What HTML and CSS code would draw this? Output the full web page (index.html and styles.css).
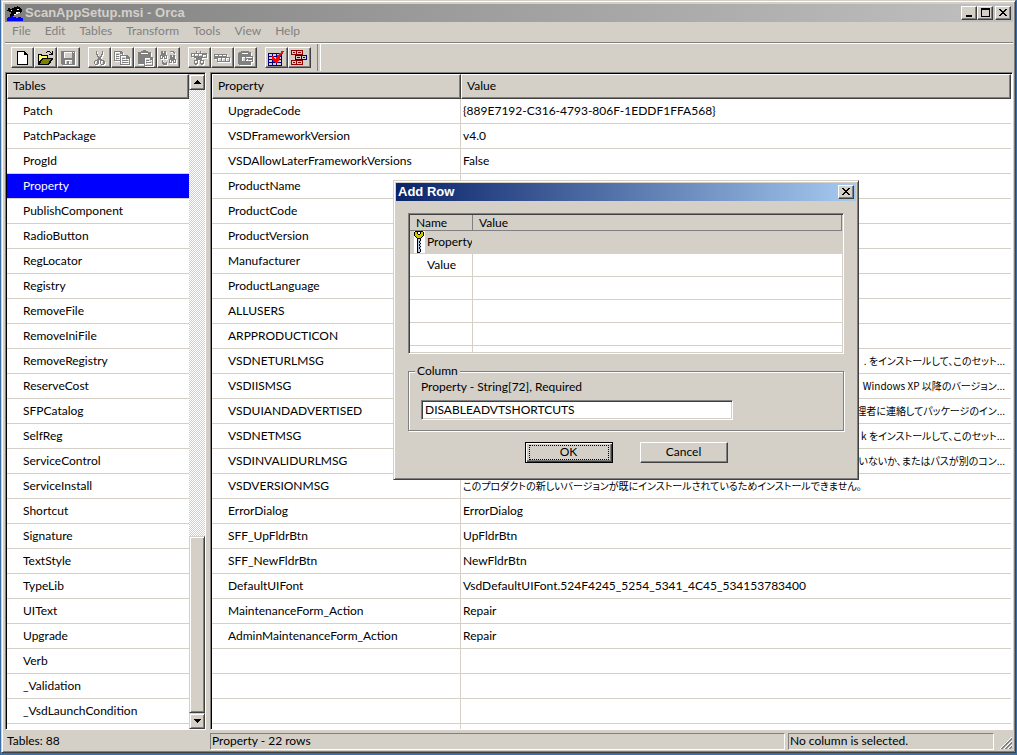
FILE: index.html
```
<!DOCTYPE html>
<html lang="en">
<head>
    <meta charset="UTF-8">
    <meta name="viewport" content="width=device-width, initial-scale=1.0">
    <title>ScanAppSetup.msi - Orca</title>
    <link rel="stylesheet" href="styles.css">
</head>
<body>
    <div class="window">
        <header class="titlebar">
            <svg class="app-icon" viewBox="0 0 16 16" shape-rendering="crispEdges">
                <path d="M1 3h2v1h2V3h2V2h3V1h1v1h2v1h1v1h1v3h-1v1h-3v1H9v1H7v1H5v1H3V9h1V7H2V6H0V5h1z" fill="#000"/>
                <path d="M10 4h2v1h-2zM9 7h4v1h-2v1H9v1H7V9h2zM4 5h1v1H4z" fill="#fff"/>
                <path d="M0 13h1v-1h3v-1h2v1h3v1h2v-1h3v1h2v3H0z" fill="#00f"/>
            </svg>
            <h1 class="title">ScanAppSetup.msi - Orca</h1>
            <div class="caption-buttons">
                <button class="caption" aria-label="Minimize"><svg viewBox="0 0 12 10" shape-rendering="crispEdges"><path d="M3 7h6v2H3z"/></svg></button>
                <button class="caption" aria-label="Maximize"><svg viewBox="0 0 12 10" shape-rendering="crispEdges"><path d="M2 0h9v9H2zM3 2v6h7V2z" fill-rule="evenodd"/></svg></button>
                <button class="caption close" aria-label="Close"><svg viewBox="0 0 12 10" shape-rendering="crispEdges"><path d="M2 1h2v1h1v1h2V2h1V1h2v1H9v1H8v1H7v1h1v1h1v1h1v1H8V7H7V6H5v1H4v1H2V7h1V6h1V5h1V4H4V3H3V2H2z"/></svg></button>
            </div>
        </header>

        <nav class="menubar">
            <button>File</button>
            <button>Edit</button>
            <button>Tables</button>
            <button>Transform</button>
            <button>Tools</button>
            <button>View</button>
            <button>Help</button>
        </nav>

        <div class="toolbar">
            <div class="tool-group">
                <button class="tool" aria-label="New">
                    <svg viewBox="0 0 16 16" shape-rendering="crispEdges"><path d="M3 1h8v1h1v1h1v1h1v11H3z" fill="#000"/><path d="M4 2h6v3h3v9H4z" fill="#fff"/></svg>
                </button>
                <button class="tool" aria-label="Open">
                    <svg viewBox="0 0 16 16" shape-rendering="crispEdges">
                        <path d="M1 4h4v1h6v3h5v1l-4 6H1z" fill="#000"/>
                        <path d="M2 5h2v1h6v2H5L2 12z" fill="#ffff60"/>
                        <path d="M6 9h8l-3 5H3z" fill="#808000"/>
                        <path d="M9 2h1V1h3v1h1v1h1V1h1v4h-4V4h2V3h-1V2h-3v1H9z" fill="#000"/>
                    </svg>
                </button>
                <button class="tool" aria-label="Save" disabled>
                    <svg viewBox="0 0 16 16" shape-rendering="crispEdges"><path d="M1 1h14v14H2l-1-1zM4 2v6h8V2zM5 10v4h2v-3h2v3h3v-4zM13 2v1h1V2z" fill-rule="evenodd"/></svg>
                </button>
            </div>
            <div class="tool-group">
                <button class="tool" aria-label="Cut" disabled>
                    <svg viewBox="0 0 16 16" shape-rendering="crispEdges"><path d="M5 1h1v3h1v2h1v1h1V6h1V4h1V1h1v4h-1v2h-1v2h1v1h2v1h1v3h-1v1h-3v-1H9v-4H8v4H7v1H4v-1H3v-3h1v-1h2V9h1V7H6V5H5zM4 11v3h2v-3zM10 11v3h2v-3z" fill-rule="evenodd"/></svg>
                </button>
                <button class="tool" aria-label="Copy" disabled>
                    <svg viewBox="0 0 16 16" shape-rendering="crispEdges"><path d="M0 1h7l2 2v2h4l3 3v7H6v-4H0zM1 2v8h5V5h2V4H6V2zM7 6v8h8V9h-3V6zM2 4h3v1H2zM2 6h3v1H2zM2 8h3v1H2zM8 8h3v1H8zM8 10h6v1H8zM8 12h6v1H8z" fill-rule="evenodd"/></svg>
                </button>
                <button class="tool" aria-label="Paste" disabled>
                    <svg viewBox="0 0 16 16" shape-rendering="crispEdges"><path d="M1 2h3V1h2V0h3v1h2v1h3v5h2v9H7v-2H1zM4 3v1h7V3zM8 8v7h7v-5h-2V8zM9 10h3v1H9zM9 12h5v1H9z" fill-rule="evenodd"/></svg>
                </button>
                <button class="tool" aria-label="Find and replace" disabled>
                    <svg viewBox="0 0 16 16" shape-rendering="crispEdges"><path d="M1 1h2v2h1V1h2v4h1v4H4V7H3v2H0V5h1zM1 6v2h1V6zM5 6v2h1V6zM10 5h2v2h1V5h2v4h1v4h-3v-2h-1v2H9V9h1zM10 10v2h1v-2zM14 10v2h1v-2zM10 1h4v1h1v2h-1V3h-1V2h-3zM2 10h1v2h1v1h2v-1h1v3H3v-1H2z" fill-rule="evenodd"/></svg>
                </button>
            </div>
            <div class="tool-group">
                <button class="tool" aria-label="Cut row" disabled>
                    <svg viewBox="0 0 16 16" shape-rendering="crispEdges"><path d="M0 3h5V1h1v2h3V1h1v2h6v5h-5v2h2v4h-1v1h-2v-1H9v-4H7v4H6v1H4v-1H3v-4h2V8H3V7H0zM1 4v2h2V4zM4 4v2h3V4zM8 4v2h3V4zM12 5v2h3V5zM4 11v2h2v-2zM10 11v2h2v-2z" fill-rule="evenodd"/></svg>
                </button>
                <button class="tool" aria-label="Copy row" disabled>
                    <svg viewBox="0 0 16 16" shape-rendering="crispEdges"><path d="M0 4h13v3h3v5H3V9H0zM1 5v1h3V5zM5 5v1h3V5zM9 5v1h3V5zM4 8v3h3V8zM8 8v3h3V8zM12 8v3h3V8z" fill-rule="evenodd"/></svg>
                </button>
                <button class="tool" aria-label="Paste row" disabled>
                    <svg viewBox="0 0 16 16" shape-rendering="crispEdges"><path d="M2 2h2V1h8v1h2v4h2v6h-2v3H2v-1H1V3h1zM5 3v1h6V3zM5 7v4h3V7zM9 7v1h6V7zM9 10v1h6v-1zM10 9v1h1V9z" fill-rule="evenodd"/></svg>
                </button>
            </div>
            <div class="tool-group">
                <button class="tool" aria-label="Validate">
                    <svg viewBox="0 0 16 16" shape-rendering="crispEdges">
                        <path d="M0 3h14v13H0zM1 4v2h3V4zM5 4v2h3V4zM9 4v2h4V4zM1 7v2h3V7zM5 7v2h3V7zM9 7v2h4V7zM1 10v2h3v-2zM5 10v2h3v-2zM9 10v2h4v-2zM1 13v2h3v-2zM5 13v2h3v-2zM9 13v2h4v-2z" fill="#000080" fill-rule="evenodd"/>
                        <path d="M4 6h2v2h1v1h1V7h1V5h2V3h2V1h3v1h-1v2h-2v2h-1v3h-1v2h-1v2H7v-1H5v-2H4z" fill="#f00"/>
                    </svg>
                </button>
                <button class="tool" aria-label="View transform">
                    <svg viewBox="0 0 16 16" shape-rendering="crispEdges">
                        <path d="M0 0h12v5H0zM1 1v3h4V1zM6 1v3h5V1zM2 2h2v1H2zM7 2h3v1H7zM0 10h12v5H0zM1 11v3h4v-3zM6 11v3h5v-3zM2 12h2v1H2zM7 12h3v1H7z" fill="#900000" fill-rule="evenodd"/>
                        <path d="M4 5h12v5H4zM5 6v3h5V6zM11 6v3h4V6zM6 7h3v1H6zM12 7h2v1h-2z" fill="#000080" fill-rule="evenodd"/>
                    </svg>
                </button>
            </div>
        </div>

        <main class="panes">
            <section class="pane tables-pane">
                <table class="grid">
                    <thead><tr><th>Tables</th></tr></thead>
                    <tbody>
                        <tr><td>Patch</td></tr>
                        <tr><td>PatchPackage</td></tr>
                        <tr><td>ProgId</td></tr>
                        <tr class="selected"><td>Property</td></tr>
                        <tr><td>PublishComponent</td></tr>
                        <tr><td>RadioButton</td></tr>
                        <tr><td>RegLocator</td></tr>
                        <tr><td>Registry</td></tr>
                        <tr><td>RemoveFile</td></tr>
                        <tr><td>RemoveIniFile</td></tr>
                        <tr><td>RemoveRegistry</td></tr>
                        <tr><td>ReserveCost</td></tr>
                        <tr><td>SFPCatalog</td></tr>
                        <tr><td>SelfReg</td></tr>
                        <tr><td>ServiceControl</td></tr>
                        <tr><td>ServiceInstall</td></tr>
                        <tr><td>Shortcut</td></tr>
                        <tr><td>Signature</td></tr>
                        <tr><td>TextStyle</td></tr>
                        <tr><td>TypeLib</td></tr>
                        <tr><td>UIText</td></tr>
                        <tr><td>Upgrade</td></tr>
                        <tr><td>Verb</td></tr>
                        <tr><td>_Validation</td></tr>
                        <tr><td>_VsdLaunchCondition</td></tr>
                    </tbody>
                </table>
                <div class="scrollbar">
                    <button class="scroll-button" aria-label="Scroll up"><svg viewBox="0 0 7 4" shape-rendering="crispEdges"><path d="M3 0h1v1h1v1h1v1h1v1H0V3h1V2h1V1h1z"/></svg></button>
                    <div class="track"><div class="thumb"></div></div>
                    <button class="scroll-button" aria-label="Scroll down"><svg viewBox="0 0 7 4" shape-rendering="crispEdges"><path d="M0 0h7v1H6v1H5v1H4v1H3V3H2V2H1V1H0z"/></svg></button>
                </div>
            </section>

            <section class="pane rows-pane">
                <table class="grid">
                    <colgroup><col class="col-property"><col></colgroup>
                    <thead><tr><th>Property</th><th>Value</th></tr></thead>
                    <tbody>
                        <tr><td>UpgradeCode</td><td>{889E7192-C316-4793-806F-1EDDF1FFA568}</td></tr>
                        <tr><td>VSDFrameworkVersion</td><td>v4.0</td></tr>
                        <tr><td>VSDAllowLaterFrameworkVersions</td><td>False</td></tr>
                        <tr><td>ProductName</td><td></td></tr>
                        <tr><td>ProductCode</td><td></td></tr>
                        <tr><td>ProductVersion</td><td></td></tr>
                        <tr><td>Manufacturer</td><td></td></tr>
                        <tr><td>ProductLanguage</td><td></td></tr>
                        <tr><td>ALLUSERS</td><td></td></tr>
                        <tr><td>ARPPRODUCTICON</td><td></td></tr>
                        <tr><td>VSDNETURLMSG</td><td class="cut" lang="ja">. をインストールして、このセット...</td></tr>
                        <tr><td>VSDIISMSG</td><td class="cut" lang="ja">Windows XP 以降のバージョン...</td></tr>
                        <tr><td>VSDUIANDADVERTISED</td><td class="cut" lang="ja">管理者に連絡してパッケージのイン...</td></tr>
                        <tr><td>VSDNETMSG</td><td class="cut" lang="ja">k をインストールして、このセット...</td></tr>
                        <tr><td>VSDINVALIDURLMSG</td><td class="cut" lang="ja">いないか、またはパスが別のコン...</td></tr>
                        <tr><td>VSDVERSIONMSG</td><td lang="ja">このプロダクトの新しいバージョンが既にインストールされているためインストールできません。</td></tr>
                        <tr><td>ErrorDialog</td><td>ErrorDialog</td></tr>
                        <tr><td>SFF_UpFldrBtn</td><td>UpFldrBtn</td></tr>
                        <tr><td>SFF_NewFldrBtn</td><td>NewFldrBtn</td></tr>
                        <tr><td>DefaultUIFont</td><td>VsdDefaultUIFont.524F4245_5254_5341_4C45_534153783400</td></tr>
                        <tr><td>MaintenanceForm_Action</td><td>Repair</td></tr>
                        <tr><td>AdminMaintenanceForm_Action</td><td>Repair</td></tr>
                        <tr><td></td><td></td></tr>
                        <tr><td></td><td></td></tr>
                        <tr><td></td><td></td></tr>
                        <tr><td></td><td></td></tr>
                    </tbody>
                </table>
            </section>
        </main>

        <footer class="statusbar">
            <span class="status-tables">Tables: 88</span>
            <span class="status-cell status-rows">Property - 22 rows</span>
            <span class="status-cell status-column">No column is selected.</span>
            <svg class="grip" viewBox="0 0 12 12"><path d="M0 12L12 0M4 12l8-8M8 12l4-4" stroke="#fff"/><path d="M1 12L12 1M2 12L12 2M5 12l7-7M6 12l6-6M9 12l3-3M10 12l2-2" stroke="#808080"/></svg>
        </footer>
    </div>

    <div class="dialog" role="dialog" aria-labelledby="dialogTitle">
        <div class="titlebar">
            <h2 class="title" id="dialogTitle">Add Row</h2>
            <div class="caption-buttons">
                <button class="caption close" aria-label="Close"><svg viewBox="0 0 12 10" shape-rendering="crispEdges"><path d="M2 1h2v1h1v1h2V2h1V1h2v1H9v1H8v1H7v1h1v1h1v1h1v1H8V7H7V6H5v1H4v1H2V7h1V6h1V5h1V4H4V3H3V2H2z"/></svg></button>
            </div>
        </div>
        <form class="dialog-body">
            <div class="field-list">
                <table>
                    <colgroup><col class="col-name"><col></colgroup>
                    <thead><tr><th>Name</th><th>Value</th></tr></thead>
                    <tbody>
                        <tr class="current">
                            <td>
                                <div class="key-cell">
                                    <svg class="key" viewBox="0 0 11 22" shape-rendering="crispEdges">
                                        <path d="M0 0h11v22H0z" fill="#fff"/>
                                        <path d="M1 0h8v1h1v4H9v1H8v1H7v2H3V7H2V6H1V5H0V1h1z" fill="#000"/>
                                        <path d="M1 1h2v2h1v1h2V3h1V1h2v4H8v1H7v1H3V6H2V5H1z" fill="#cc0"/>
                                        <path d="M4 1h2v2H4z" fill="#fff"/>
                                        <path d="M3 8h4v13H6v1H3z" fill="#b8c8e0"/>
                                        <path d="M3 8h1v14H3zM6 8h1v2H6zM5 10h1v2H5zM6 12h1v1H6zM5 13h1v2H5zM6 15h1v1H6zM5 16h1v2H5zM6 18h1v3H6zM4 21h2v1H4z" fill="#000"/>
                                    </svg>
                                    Property
                                </div>
                            </td>
                            <td></td>
                        </tr>
                        <tr><td>Value</td><td></td></tr>
                        <tr><td></td><td></td></tr>
                        <tr><td></td><td></td></tr>
                        <tr><td></td><td></td></tr>
                        <tr><td></td><td></td></tr>
                    </tbody>
                </table>
            </div>
            <fieldset class="column-box">
                <legend>Column</legend>
                <label for="columnValue">Property - String[72], Required</label>
                <input type="text" id="columnValue" value="DISABLEADVTSHORTCUTS">
            </fieldset>
            <div class="dialog-buttons">
                <button type="button" class="push default"><span>OK</span></button>
                <button type="button" class="push">Cancel</button>
            </div>
        </form>
    </div>
</body>
</html>
```
FILE: styles.css
```
* {
    box-sizing: border-box;
}
body {
    margin: 0;
    height: 100vh;
    padding: 0 1px 2px 1px;
    overflow: hidden;
    background-color: #3a6ea5;
    font-family: Lato, "Noto Sans CJK JP", sans-serif;
    font-size: 12px;
    line-height: 16px;
    color: #000;
}
button, input {
    font: inherit;
    color: inherit;
}
button {
    padding: 0;
    border: none;
    background-color: #d4d0c8;
}
svg {
    display: block;
}
table {
    width: 100%;
    table-layout: fixed;
    border-collapse: separate;
    border-spacing: 0;
}
th {
    font-weight: normal;
    text-align: left;
    background-color: #d4d0c8;
}
td {
    white-space: nowrap;
    overflow: hidden;
}

/* main window */
.window {
    display: flex;
    flex-direction: column;
    height: 100%;
    padding: 2px 1px 0 2px;
    background-color: #d4d0c8;
    border: 1px solid #404040;
    border-top-color: #d4d0c8;
    border-left-color: #d4d0c8;
    box-shadow: inset 1px 1px #fff, inset -1px -1px #808080;
}
.titlebar {
    display: flex;
    align-items: center;
    height: 18px;
    margin: 1px 1px 0 1px;
    padding: 0 2px;
    background: linear-gradient(to right, #808080, #c0c0c0);
    color: #d4d0c8;
}
.app-icon {
    width: 16px;
    height: 16px;
    margin-right: 2px;
}
.title {
    flex: 1;
    margin: 0;
    font-family: "Liberation Sans", sans-serif;
    font-size: 13px;
    line-height: 16px;
    font-weight: bold;
}
.caption-buttons {
    display: flex;
}
.caption {
    width: 16px;
    height: 14px;
    padding: 1px;
    border: 1px solid #404040;
    border-top-color: #fff;
    border-left-color: #fff;
    box-shadow: inset -1px -1px #808080;
}
.caption svg {
    width: 12px;
    height: 10px;
}
.caption + .close {
    margin-left: 2px;
}
.menubar {
    display: flex;
    gap: 14px;
    height: 20px;
    padding: 0 8px 2px;
}
.menubar button {
    color: #808080;
}

/* toolbar */
.toolbar {
    display: flex;
    align-items: center;
    gap: 8px;
    height: 30px;
    margin: 0 1px;
    padding-left: 6px;
    border-top: 1px solid #808080;
    box-shadow: inset 0 1px #fff;
}
.toolbar::after {
    content: "";
    width: 2px;
    height: 27px;
    margin-left: -2px;
    border-left: 1px solid #808080;
    border-right: 1px solid #fff;
}
.tool-group {
    display: flex;
}
.tool {
    width: 23px;
    height: 21px;
    padding: 1px 2px;
    border: 1px solid #404040;
    border-top-color: #fff;
    border-left-color: #fff;
    box-shadow: inset -1px -1px #808080;
}
.tool svg {
    width: 16px;
    height: 16px;
}
.tool:disabled svg {
    fill: #808080;
    filter: drop-shadow(1px 1px 0 #fff);
}

/* panes */
.panes {
    display: flex;
    flex: 1;
    gap: 4px;
    min-height: 0;
    margin: 0 1px;
}
.pane {
    display: flex;
    align-items: flex-start;
    overflow: hidden;
    background-color: #fff;
    border: 1px solid #808080;
    border-right-color: #fff;
    border-bottom-color: #fff;
    box-shadow: inset 1px 1px #000;
    padding: 1px 0 0 1px;
}
.tables-pane {
    flex: 0 0 201px;
}
.rows-pane {
    flex: 1;
    padding-right: 1px;
}
.grid {
    flex: 1;
}
.grid th {
    height: 25px;
    padding: 0 5px 2px;
    border: 1px solid #404040;
    border-top-color: #fff;
    border-left-color: #fff;
    box-shadow: inset -1px -1px #808080;
}
.grid td {
    height: 25px;
    padding: 0 2px;
    border-bottom: 1px solid #d4d0c8;
}
.grid td:first-child {
    padding-left: 16px;
}
.rows-pane td:first-child {
    border-right: 1px solid #d4d0c8;
}
.col-property {
    width: 249px;
}
.grid td.cut {
    padding-right: 6px;
    text-align: right;
}
td:lang(ja) {
    font-family: "Noto Sans CJK JP", sans-serif;
    font-size: 10px;
    font-feature-settings: "palt";
}
.selected td {
    background-color: #00f;
    color: #fff;
}
.scrollbar {
    display: flex;
    flex-direction: column;
    align-self: stretch;
    width: 16px;
}
.scroll-button {
    display: flex;
    align-items: center;
    justify-content: center;
    height: 16px;
    border: 1px solid #404040;
    border-top-color: #d4d0c8;
    border-left-color: #d4d0c8;
    box-shadow: inset 1px 1px #fff, inset -1px -1px #808080;
}
.scroll-button svg {
    width: 7px;
    height: 4px;
}
.track {
    display: flex;
    flex: 1;
    flex-direction: column;
    justify-content: flex-end;
    background: repeating-conic-gradient(#fff 0 25%, #d4d0c8 0 50%) 0 0 / 2px 2px;
}
.thumb {
    flex: 0 0 177px;
    background-color: #d4d0c8;
    border: 1px solid #404040;
    border-top-color: #d4d0c8;
    border-left-color: #d4d0c8;
    box-shadow: inset 1px 1px #fff, inset -1px -1px #808080;
}

/* status bar */
.statusbar {
    display: flex;
    align-items: center;
    gap: 3px;
    height: 22px;
    padding: 0 2px;
}
.status-tables {
    flex: 0 0 201px;
    padding-left: 1px;
}
.status-cell {
    height: 17px;
    line-height: 14px;
    padding-left: 1px;
    border: 1px solid #fff;
    border-top-color: #808080;
    border-left-color: #808080;
}
.status-rows {
    flex: 1;
}
.status-column {
    flex: 0 0 206px;
}
.grip {
    width: 12px;
    height: 12px;
    margin: 4px 0 0 3px;
}

/* Add Row dialog */
.dialog {
    position: absolute;
    left: 393px;
    top: 180px;
    width: 466px;
    padding: 2px;
    background-color: #d4d0c8;
    border: 1px solid #404040;
    border-top-color: #d4d0c8;
    border-left-color: #d4d0c8;
    box-shadow: inset 1px 1px #fff, inset -1px -1px #808080;
}
.dialog .titlebar {
    margin: 0;
    background: linear-gradient(to right, #0a246a, #a6caf0);
    color: #fff;
}
.dialog-body {
    padding: 12px 12px 14px;
}
.field-list {
    height: 141px;
    overflow: hidden;
    background-color: #fff;
    border: 1px solid #fff;
    border-top-color: #808080;
    border-left-color: #808080;
    box-shadow: inset 1px 1px #404040, inset -1px -1px #d4d0c8;
    padding: 1px;
}
.col-name {
    width: 63px;
}
.field-list th {
    height: 16px;
    line-height: 14px;
    padding: 0 6px;
    border-right: 1px solid #808080;
    border-bottom: 1px solid #808080;
}
.field-list td {
    height: 23px;
    padding: 0 0 0 17px;
    border-bottom: 1px solid #d4d0c8;
}
.field-list td:first-child {
    border-right: 1px solid #d4d0c8;
}
.field-list .current td {
    padding: 0;
    background-color: #d4d0c8;
}
.key-cell {
    display: flex;
    align-items: center;
    gap: 2px;
    padding-left: 4px;
}
.key {
    flex: none;
    width: 11px;
    height: 22px;
}
.column-box {
    margin: 9px 0 0;
    padding: 0 12px 10px;
    border: 1px solid #808080;
    box-shadow: 1px 1px #fff, inset 1px 1px #fff;
}
.column-box legend {
    margin-left: -6px;
    padding: 0 2px;
    background-color: #d4d0c8;
}
.column-box label {
    display: block;
    margin-bottom: 5px;
}
.column-box input {
    display: block;
    width: 312px;
    max-width: 100%;
    height: 20px;
    padding: 0 3px 2px;
    border: 1px solid #fff;
    border-top-color: #808080;
    border-left-color: #808080;
    box-shadow: inset 1px 1px #404040, inset -1px -1px #d4d0c8;
    outline: none;
}
.dialog-buttons {
    display: flex;
    justify-content: center;
    gap: 27px;
    margin-top: 11px;
}
.push {
    width: 88px;
    height: 21px;
    padding-bottom: 2px;
    border: 1px solid #404040;
    border-top-color: #fff;
    border-left-color: #fff;
    box-shadow: inset -1px -1px #808080;
}
.push.default {
    padding: 2px;
    border-color: #000;
    box-shadow: inset 1px 1px #fff, inset -1px -1px #404040, inset -2px -2px #808080;
}
.push.default span {
    display: block;
    height: 15px;
    line-height: 12px;
    margin: 0 1px;
    border: 1px dotted #000;
}
```
